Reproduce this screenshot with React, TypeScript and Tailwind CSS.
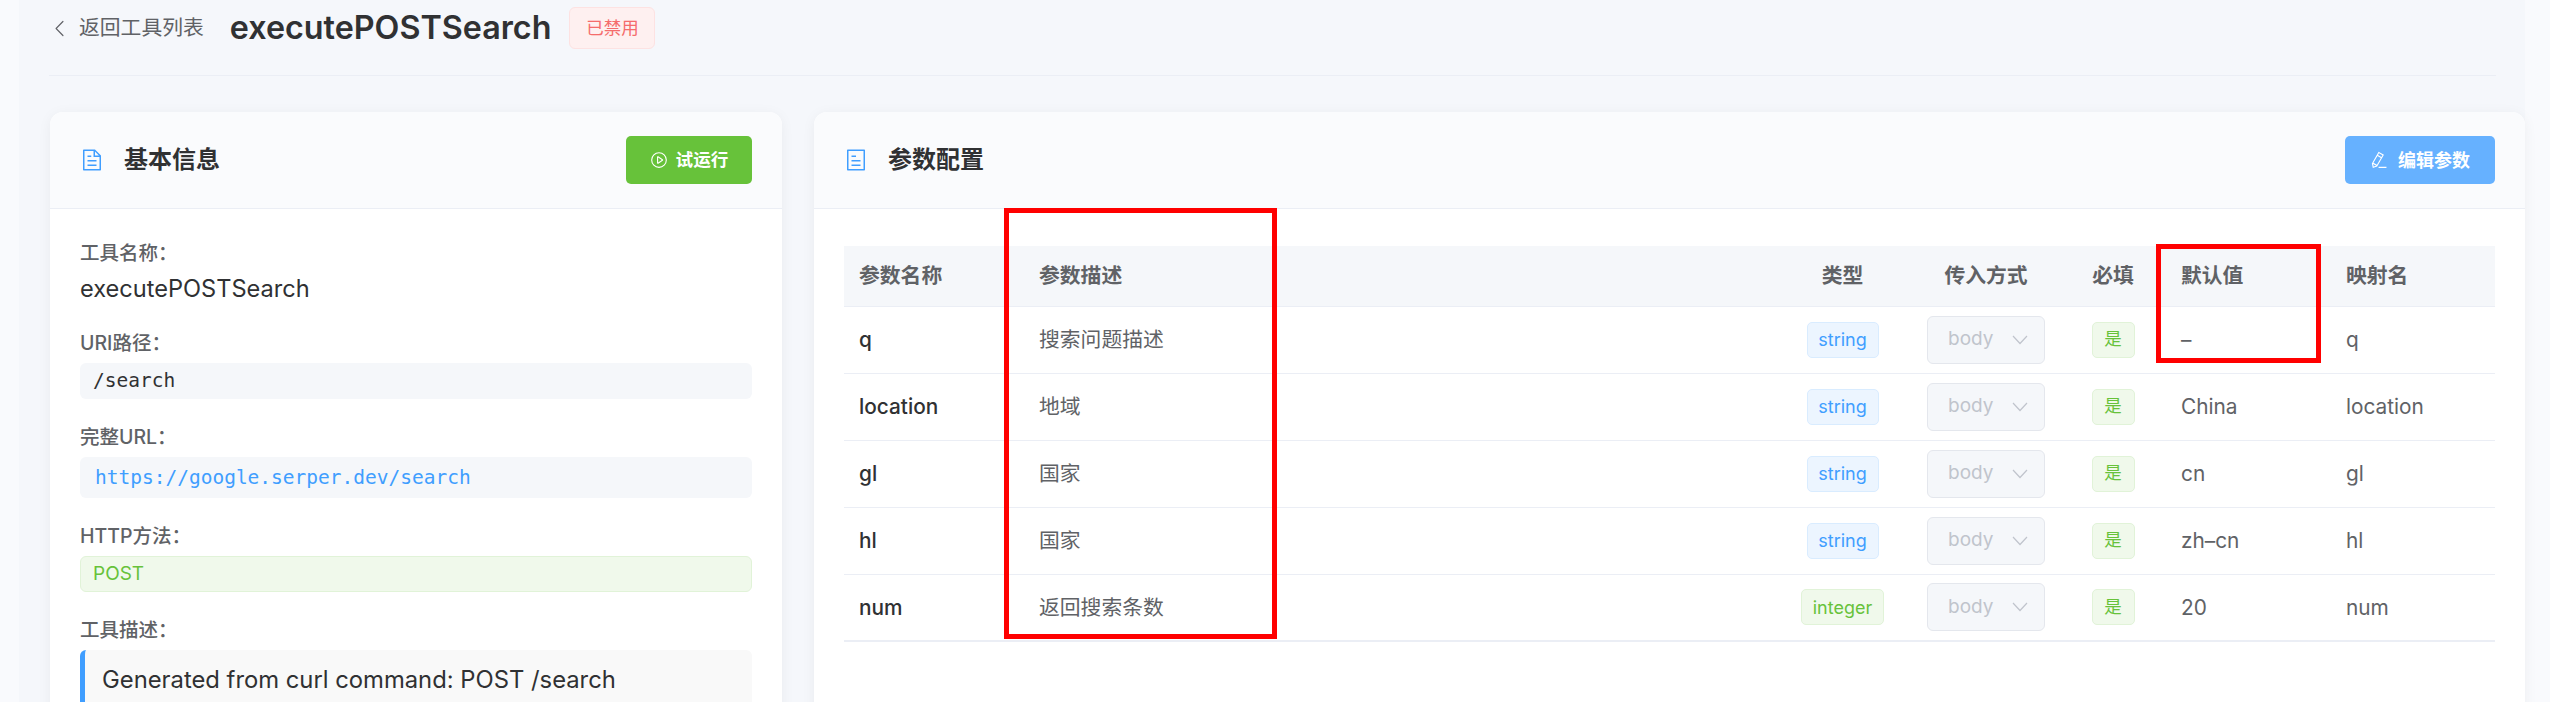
const DOC_PATH =
  "M832 384H576V128H192v768h640V384zm-26.496-64L640 154.496V320h165.504zM160 64h480l256 256v608a32 32 0 0 1-32 32H160a32 32 0 0 1-32-32V96a32 32 0 0 1 32-32zm160 448h384v64H320v-64zm0-192h160v64H320v-64zm0 384h384v64H320v-64z";
const TICKETS_PATH =
  "M192 128v768h640V128H192zm-32-64h704a32 32 0 0 1 32 32v832a32 32 0 0 1-32 32H160a32 32 0 0 1-32-32V96a32 32 0 0 1 32-32zm160 448h384v64H320v-64zm0-192h192v64H320v-64zm0 384h384v64H320v-64z";
const PLAY_PATH =
  "M512 64a448 448 0 1 1 0 896 448 448 0 0 1 0-896zm0 832a384 384 0 0 0 0-768 384 384 0 0 0 0 768zm-48-247.616L668.608 512 464 375.616v272.768zm10.624-342.656 249.472 166.336a48 48 0 0 1 0 79.872L474.624 718.272A48 48 0 0 1 400 678.336V345.6a48 48 0 0 1 74.624-39.936z";
const PEN_PATH =
  "m199.04 672.64 193.984 112 224-387.968-193.92-112-224 388.032zm-23.872 60.16 32.896 148.288 144.896-45.696L176 732.8zM455.04 229.248l193.92 112 56.704-98.112-193.984-112-56.64 98.112zM104.32 708.8l384-665.024 304.768 175.936L409.152 884.8h.064l-248.448 78.336L104.32 708.8zm384 254.272v-64h448v64h-448z";
const LEFT_PATH =
  "M609.408 149.376 277.76 489.6a32 32 0 0 0 0 44.672l331.648 340.352a29.12 29.12 0 0 0 41.728 0 30.592 30.592 0 0 0 0-42.752L339.264 511.936l311.872-319.872a30.592 30.592 0 0 0 0-42.688 29.12 29.12 0 0 0-41.728 0z";

function Icon({ d, className }: { d: string; className?: string }) {
  return (
    <svg viewBox="0 0 1024 1024" fill="currentColor" className={className}>
      <path d={d} />
    </svg>
  );
}

function CardHeader({ icon, title, children }: { icon: string; title: string; children: React.ReactNode }) {
  return (
    <div className="flex h-[97px] items-center justify-between border-b border-[#ebeef5] bg-[#fafbfd] px-[30px]">
      <div className="flex items-center">
        <Icon d={icon} className="h-[24px] w-[24px] text-[#409eff]" />
        <span className="ml-[20px] text-[24px] font-bold text-[#303133]">{title}</span>
      </div>
      {children}
    </div>
  );
}

function Field({ label, children }: { label: string; children: React.ReactNode }) {
  return (
    <div>
      <div className="mb-[6px] h-[28px] text-[19.5px] leading-[28px] font-medium text-[#606266]">{label}：</div>
      {children}
    </div>
  );
}

const rows = [
  { name: "q", desc: "搜索问题描述", type: "string", def: "–", map: "q" },
  { name: "location", desc: "地域", type: "string", def: "China", map: "location" },
  { name: "gl", desc: "国家", type: "string", def: "cn", map: "gl" },
  { name: "hl", desc: "国家", type: "string", def: "zh–cn", map: "hl" },
  { name: "num", desc: "返回搜索条数", type: "integer", def: "20", map: "num" },
];

function TypeTag({ type }: { type: string }) {
  const green = type === "integer";
  return (
    <span
      className={
        green
          ? "inline-flex h-[36px] w-[83px] items-center justify-center rounded-[5px] border border-[#e1f3d8] bg-[#f0f9eb] text-[18px] text-[#67c23a]"
          : "inline-flex h-[36px] w-[72px] items-center justify-center rounded-[5px] border border-[#d9ecff] bg-[#ecf5ff] text-[18px] text-[#409eff]"
      }
    >
      {type}
    </span>
  );
}

export default function App() {
  return (
    <div
      className="flex h-[702px] w-[2550px] overflow-hidden bg-[#f9fafd]"
      style={{ fontFamily: 'Inter, "Noto Sans CJK SC", sans-serif' }}
    >
      <div className="relative ml-[19px] mr-[25px] flex-1 bg-[#f5f7fb] pl-[31px]">
        <div className="-ml-[1px] mr-[29px] flex h-[76px] items-start border-b border-[#ebeef5] pt-[7px]">
          <div className="flex h-[42px] items-center text-[20.8px] text-[#606266]">
            <Icon d={LEFT_PATH} className="ml-[1px] h-[21px] w-[21px]" />
            <span className="ml-[8px]">返回工具列表</span>
          </div>
          <h1 className="ml-[26px] flex h-[42px] items-center text-[32.3px] font-semibold text-[#303133]">executePOSTSearch</h1>
          <span className="ml-[18px] flex h-[42px] w-[86px] items-center justify-center rounded-[6px] border border-[#fde2e2] bg-[#fef0f0] text-[17.5px] text-[#f56c6c]">
            已禁用
          </span>
        </div>

        <div className="mt-[36px] flex gap-[32px]">
          <div className="w-[732px] shrink-0 overflow-hidden rounded-[13px] bg-white shadow-[0_2px_14px_rgba(0,0,0,0.05)]">
            <CardHeader icon={DOC_PATH} title="基本信息">
              <button className="flex h-[48px] w-[126px] items-center justify-center gap-[8px] rounded-[5px] bg-[#67c23a] text-[17.6px] font-bold text-white">
                <Icon d={PLAY_PATH} className="h-[18px] w-[18px]" />
                试运行
              </button>
            </CardHeader>
            <div className="flex flex-col gap-[24px] p-[30px]">
              <Field label="工具名称">
                <div className="h-[32px] text-[23.6px] leading-[32px] text-[#303133]">executePOSTSearch</div>
              </Field>
              <Field label="URI路径">
                <div className="flex h-[36px] items-center rounded-[6px] bg-[#f5f7fa] px-[13px] font-['DejaVu_Sans_Mono',monospace] text-[19.5px] text-[#303133]">
                  /search
                </div>
              </Field>
              <Field label="完整URL">
                <div className="flex h-[41px] items-center rounded-[6px] bg-[#f5f7fa] px-[15px] font-['DejaVu_Sans_Mono',monospace] text-[19.5px] text-[#409eff]">
                  https://google.serper.dev/search
                </div>
              </Field>
              <Field label="HTTP方法">
                <div className="flex h-[36px] items-center rounded-[6px] border border-[#e1f3d8] bg-[#f0f9eb] px-[12px] text-[19px] text-[#67c23a]">
                  POST
                </div>
              </Field>
              <Field label="工具描述">
                <div className="rounded-[6px] border-l-[5px] border-[#409eff] bg-[#f9f9f9] px-[17px] py-[14px] text-[23.8px] leading-[32px] text-[#303133]">
                  Generated from curl command: POST /search
                </div>
              </Field>
            </div>
          </div>

          <div className="flex-1 overflow-hidden rounded-[13px] bg-white shadow-[0_2px_14px_rgba(0,0,0,0.05)]">
            <CardHeader icon={TICKETS_PATH} title="参数配置">
              <button className="flex h-[48px] w-[150px] items-center justify-center gap-[10px] rounded-[5px] bg-[#66b1ff] text-[18px] font-bold text-white">
                <Icon d={PEN_PATH} className="h-[18px] w-[18px]" />
                编辑参数
              </button>
            </CardHeader>
            <div className="px-[30px] pt-[37px]">
              <table className="w-[1651px] table-fixed border-b-2 border-[#ebeef5] text-[20.8px]">
                <colgroup>
                  <col className="w-[179px]" />
                  <col className="w-[751px]" />
                  <col className="w-[137px]" />
                  <col className="w-[150px]" />
                  <col className="w-[104px]" />
                  <col className="w-[165px]" />
                  <col className="w-[165px]" />
                </colgroup>
                <thead>
                  <tr className="h-[60px] border-b border-[#ebeef5] bg-[#f5f7fa] font-bold text-[#606266]">
                    <th className="px-[15px] text-left font-bold">参数名称</th>
                    <th className="px-[16px] text-left font-bold">参数描述</th>
                    <th className="text-center font-bold">类型</th>
                    <th className="text-center font-bold">传入方式</th>
                    <th className="text-center font-bold">必填</th>
                    <th className="px-[16px] text-left font-bold">默认值</th>
                    <th className="px-[16px] text-left font-bold">映射名</th>
                  </tr>
                </thead>
                <tbody>
                  {rows.map((row, i) => (
                    <tr key={row.name} className={i < rows.length - 1 ? "h-[67px] border-b border-[#ebeef5]" : "h-[67px]"}>
                      <td className="px-[15px] font-medium text-[#303133]">{row.name}</td>
                      <td className="px-[16px] text-[#606266]">{row.desc}</td>
                      <td className="text-center">
                        <TypeTag type={row.type} />
                      </td>
                      <td>
                        <div className="mx-auto flex h-[48px] w-[118px] items-center justify-between rounded-[6px] border border-[#e4e7ed] bg-[#f5f7fa] pl-[20px] pr-[16px] text-[19px] text-[#c0c4cc]">
                          body
                          <svg viewBox="0 0 16 10" fill="none" stroke="currentColor" strokeWidth="1.2" className="h-[10px] w-[16px]">
                            <path d="M1 1l7 7.5L15 1" />
                          </svg>
                        </div>
                      </td>
                      <td className="text-center">
                        <span className="inline-flex h-[36px] w-[43px] items-center justify-center rounded-[5px] border border-[#e1f3d8] bg-[#f0f9eb] text-[17.5px] text-[#67c23a]">
                          是
                        </span>
                      </td>
                      <td className="px-[16px] text-[#606266]">{row.def}</td>
                      <td className="px-[16px] text-[#606266]">{row.map}</td>
                    </tr>
                  ))}
                </tbody>
              </table>
            </div>
          </div>
        </div>

        <div className="absolute left-[985px] top-[208px] h-[431px] w-[273px] border-[5px] border-[#ff0000]" />
        <div className="absolute left-[2137px] top-[244px] h-[119px] w-[165px] border-[5px] border-[#ff0000]" />
      </div>
    </div>
  );
}
